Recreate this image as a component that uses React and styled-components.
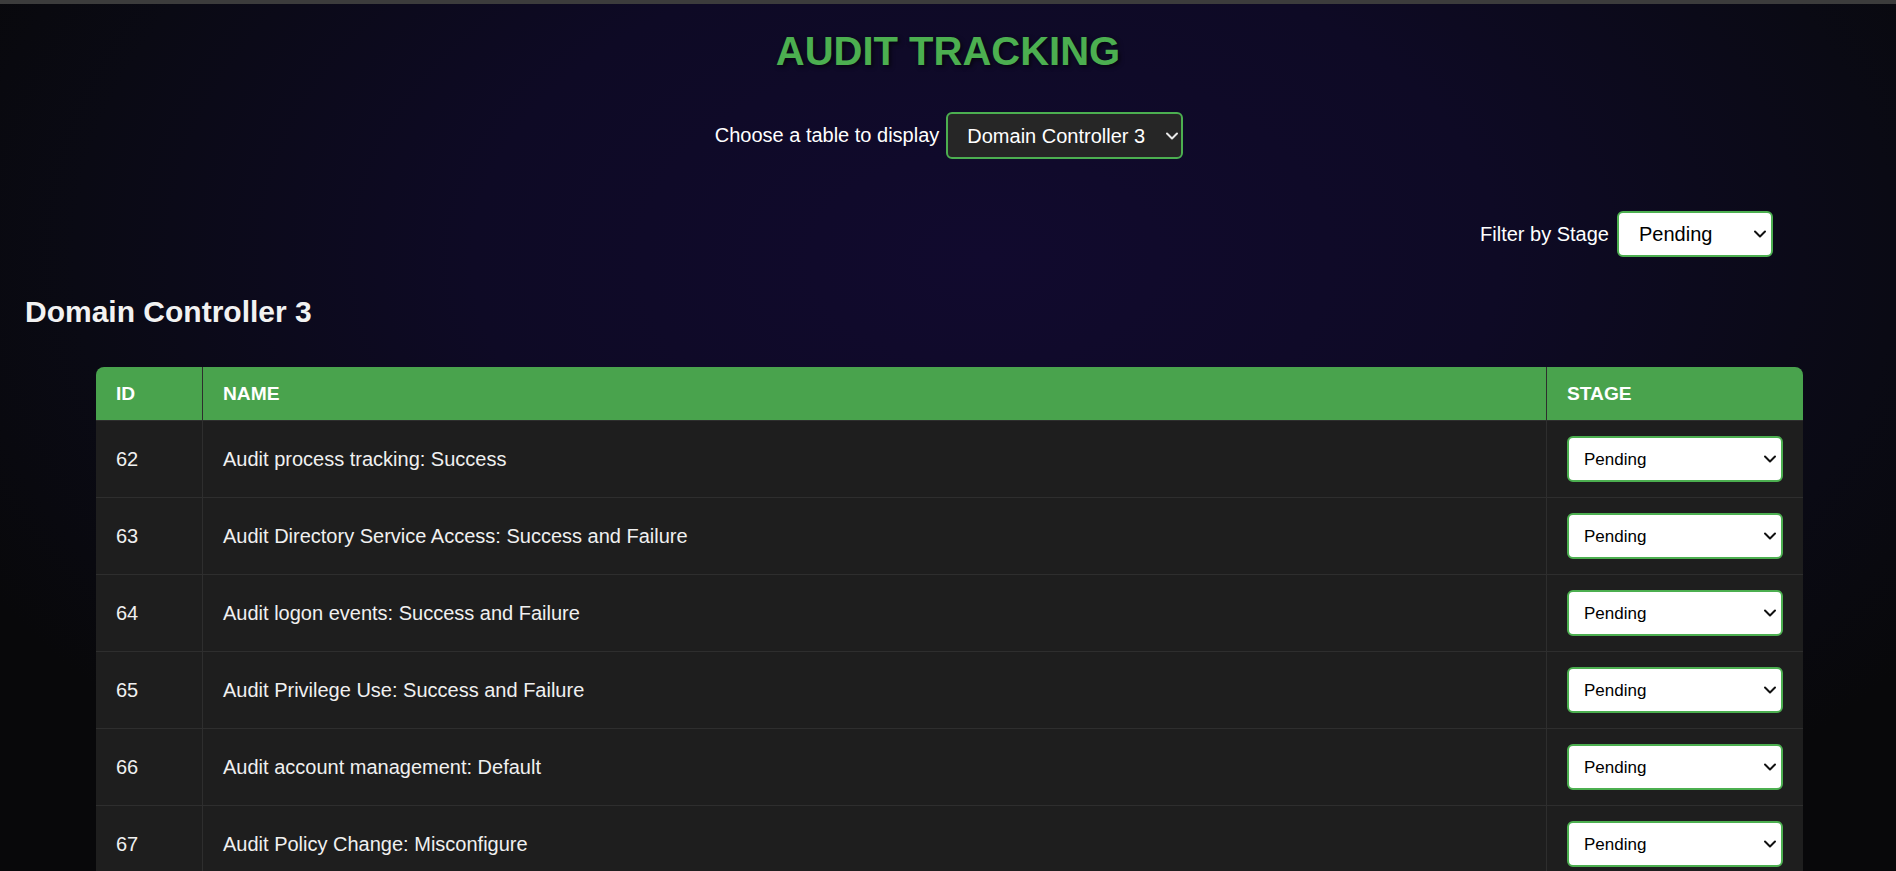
import React, { useState } from "react";
import styled, { createGlobalStyle } from "styled-components";
import { ChevronDown } from "lucide-react";

const GlobalStyle = createGlobalStyle`
  html, body {
    margin: 0;
    padding: 0;
  }
  body {
    font-family: "Liberation Sans", Arial, sans-serif;
    background: #08080a;
  }
`;

const Page = styled.div`
  min-height: 100vh;
  background: radial-gradient(
    ellipse 60% 75% at 52% 28%,
    #110a2e 0%,
    #0e0a25 45%,
    #0a0a14 80%,
    #08080a 100%
  );
  color: #f0f0f0;
  padding-bottom: 40px;
`;

const TopBar = styled.div`
  height: 4px;
  background: #3c3c3c;
`;

const Title = styled.h1`
  margin: 24px 0 0;
  line-height: 46px;
  font-size: 40px;
  font-weight: bold;
  text-align: center;
  color: #4caf50;
  text-shadow: 2px 2px 4px rgba(0, 0, 0, 0.6);
`;

const Chooser = styled.div`
  display: flex;
  justify-content: center;
  align-items: center;
  gap: 7px;
  margin-top: 38px;
  padding-left: 2px;
`;

const Filter = styled.div`
  display: flex;
  justify-content: flex-end;
  align-items: center;
  gap: 8px;
  margin-top: 52px;
  padding-right: 123px;
`;

const Label = styled.label`
  font-size: 20px;
  color: #ffffff;
`;

const SelectBox = styled.div`
  position: relative;
  display: inline-block;
  width: ${(p) => p.$width};
  color: ${(p) => (p.$dark ? "#e8e8e8" : "#111111")};
  vertical-align: middle;

  svg {
    position: absolute;
    right: ${(p) => p.$arrow || 3}px;
    top: 50%;
    transform: translateY(-50%);
    pointer-events: none;
  }
`;

const Select = styled.select`
  appearance: none;
  -webkit-appearance: none;
  display: block;
  box-sizing: border-box;
  font-family: "Liberation Sans", Arial, sans-serif;
  font-size: ${(p) => p.$size || 20}px;
  width: 100%;
  height: ${(p) => p.$height}px;
  padding: 0 24px 0 ${(p) => p.$pad || 16}px;
  border: 2px solid #4caf50;
  border-radius: 6px;
  background: ${(p) => (p.$dark ? "#262626" : "#ffffff")};
  color: ${(p) => (p.$dark ? "#ffffff" : "#000000")};
  outline: none;
  cursor: pointer;
`;

const Heading = styled.h2`
  margin: 37px 0 0;
  padding-left: 25px;
  font-size: 30px;
  line-height: 35px;
  font-weight: bold;
  color: #f2f2f2;
`;

const TableWrap = styled.div`
  margin: 38px 93px 0 96px;
  border-radius: 8px 8px 0 0;
  overflow: hidden;
`;

const Table = styled.table`
  width: 100%;
  border-collapse: separate;
  border-spacing: 0;
  table-layout: fixed;
`;

const Th = styled.th`
  box-sizing: border-box;
  width: ${(p) => p.$width || "auto"};
  background: #49a34d;
  color: #ffffff;
  font-size: 19.2px;
  font-weight: bold;
  text-align: left;
  text-transform: uppercase;
  padding: 15px 20px;
  line-height: 23px;
  border-bottom: 1px solid #2e2e2e;
  border-right: 1px solid #2e2e2e;
  &:last-child {
    border-right: none;
  }
`;

const Td = styled.td`
  box-sizing: border-box;
  background: #1e1e1e;
  color: #f0f0f0;
  font-size: 20px;
  padding: 15px 20px;
  line-height: 23px;
  vertical-align: middle;
  border-bottom: 1px solid #2e2e2e;
  border-right: 1px solid #2e2e2e;
  &:last-child {
    border-right: none;
  }
`;

const rows = [
  { id: 62, name: "Audit process tracking: Success" },
  { id: 63, name: "Audit Directory Service Access: Success and Failure" },
  { id: 64, name: "Audit logon events: Success and Failure" },
  { id: 65, name: "Audit Privilege Use: Success and Failure" },
  { id: 66, name: "Audit account management: Default" },
  { id: 67, name: "Audit Policy Change: Misconfigure" },
];

const stages = ["Pending", "In Progress", "Completed"];

function Dropdown({ width, height, size, pad, arrow, dark, children, ...rest }) {
  return (
    <SelectBox $width={width} $dark={dark} $arrow={arrow}>
      <Select $height={height} $size={size} $pad={pad} $dark={dark} {...rest}>
        {children}
      </Select>
      <ChevronDown size={20} strokeWidth={2.4} />
    </SelectBox>
  );
}

export default function App() {
  const [table, setTable] = useState("Domain Controller 3");
  const [filter, setFilter] = useState("Pending");

  return (
    <Page>
      <GlobalStyle />
      <TopBar />
      <Title>AUDIT TRACKING</Title>
      <Chooser>
        <Label htmlFor="table">Choose a table to display</Label>
        <Dropdown
          id="table"
          dark
          width="237px"
          height={47}
          pad={19}
          arrow={1}
          value={table}
          onChange={(e) => setTable(e.target.value)}
        >
          <option>Domain Controller 1</option>
          <option>Domain Controller 2</option>
          <option>Domain Controller 3</option>
        </Dropdown>
      </Chooser>
      <Filter>
        <Label htmlFor="filter">Filter by Stage</Label>
        <Dropdown
          id="filter"
          width="156px"
          height={46}
          pad={20}
          arrow={3}
          value={filter}
          onChange={(e) => setFilter(e.target.value)}
        >
          {stages.map((s) => (
            <option key={s}>{s}</option>
          ))}
        </Dropdown>
      </Filter>
      <Heading>{table}</Heading>
      <TableWrap>
        <Table>
          <thead>
            <tr>
              <Th $width="107px">ID</Th>
              <Th>Name</Th>
              <Th $width="256px">Stage</Th>
            </tr>
          </thead>
          <tbody>
            {rows.map((r) => (
              <tr key={r.id}>
                <Td>{r.id}</Td>
                <Td>{r.name}</Td>
                <Td>
                  <Dropdown width="100%" height={46} size={17} pad={15} arrow={3} defaultValue="Pending">
                    {stages.map((s) => (
                      <option key={s}>{s}</option>
                    ))}
                  </Dropdown>
                </Td>
              </tr>
            ))}
          </tbody>
        </Table>
      </TableWrap>
    </Page>
  );
}
